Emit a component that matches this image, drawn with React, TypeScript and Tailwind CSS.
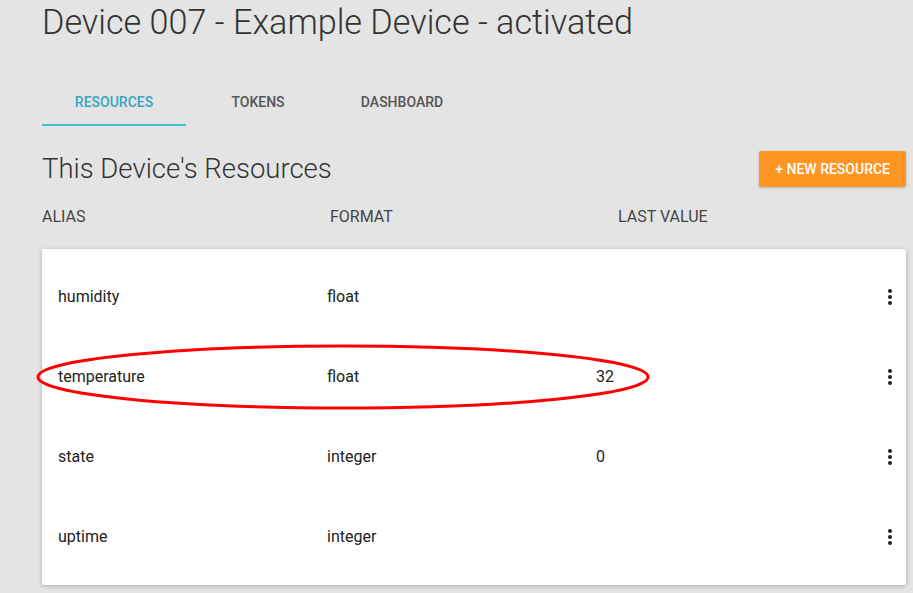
import { FC } from "react";

const rows = [
  { alias: "humidity", format: "float", value: "" },
  { alias: "temperature", format: "float", value: "32" },
  { alias: "state", format: "integer", value: "0" },
  { alias: "uptime", format: "integer", value: "" },
];

const Dots: FC = () => (
  <svg width="4" height="16" viewBox="0 0 4 16" className="fill-[#222]">
    <circle cx="2" cy="2" r="2" />
    <circle cx="2" cy="8" r="2" />
    <circle cx="2" cy="14" r="2" />
  </svg>
);

export default function App() {
  return (
    <div className="min-h-[593px] bg-[#e4e4e4] pl-[42px] pr-[7px] font-['Roboto',sans-serif] overflow-hidden">
      {/* Title */}
      <h1 className="pt-[2px] h-[58px] text-[34.2px] font-light text-[#333] leading-[40px]">
        Device 007 - Example Device - activated
      </h1>

      {/* Tabs */}
      <div className="flex mt-[22px] h-[46px]">
        {["Resources", "Tokens", "Dashboard"].map((tab, i) => (
          <div
            key={tab}
            className={`w-[144px] flex items-center justify-center text-[14px] font-medium uppercase border-b-2 ${
              i === 0
                ? "text-[#35a6c1] border-[#40c0da]"
                : "text-[#555] border-transparent"
            }`}
          >
            {tab}
          </div>
        ))}
      </div>

      {/* Section header */}
      <div className="flex items-center justify-between mt-[25px] h-[36px]">
        <h2 className="text-[27.5px] font-light text-[#333]">This Device's Resources</h2>
        <button className="h-[36px] px-[16px] bg-[#ff9522] text-white text-[14px] font-medium rounded-[2px] shadow-[0_1px_3px_rgba(0,0,0,0.2)]">
          + NEW RESOURCE
        </button>
      </div>

      {/* Column headings */}
      <div className="flex mt-[17px] h-[25px] items-center text-[16px] text-[#444]">
        <div className="w-[288px]">ALIAS</div>
        <div className="w-[288px]">FORMAT</div>
        <div>LAST VALUE</div>
      </div>

      {/* Card */}
      <div className="relative mt-[20px] bg-white rounded-[2px] shadow-[0_1px_4px_rgba(0,0,0,0.25)] py-[8px]">
        {rows.map((r) => (
          <div key={r.alias} className="flex items-center h-[80px] pl-[16px] pr-[14px] text-[16px] text-[#222]">
            <div className="w-[269px]">{r.alias}</div>
            <div className="w-[269px]">{r.format}</div>
            <div className="flex-1">{r.value}</div>
            <Dots />
          </div>
        ))}

        {/* red annotation ellipse */}
        <svg
          className="absolute left-[-7px] top-[94px] pointer-events-none"
          width="616"
          height="68"
          viewBox="0 0 616 68"
        >
          <ellipse cx="308" cy="34" rx="305" ry="31" fill="none" stroke="#f00" strokeWidth="3" />
        </svg>
      </div>
    </div>
  );
}
